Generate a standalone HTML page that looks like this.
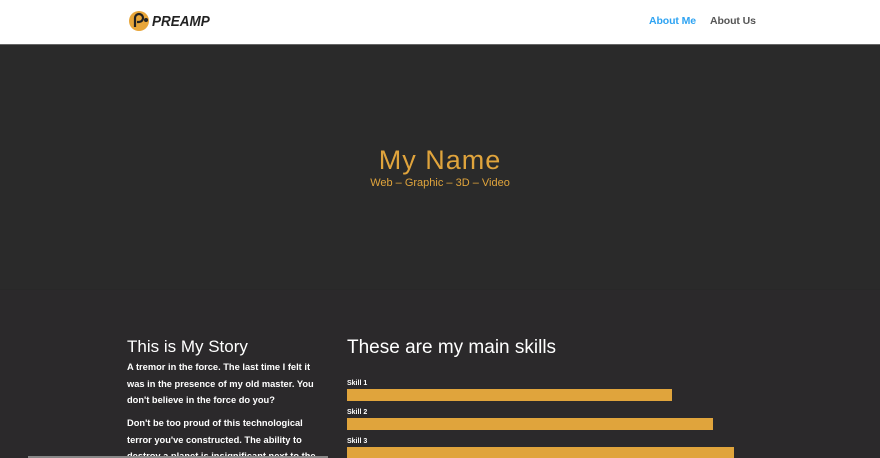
<!DOCTYPE html>
<html style="width:880px;height:458px;overflow:hidden"><head><meta charset="utf-8"><style>
*{margin:0;padding:0;box-sizing:border-box}
body{width:880px;height:458px;overflow:hidden;background:#2b292b;font-family:"Liberation Sans",sans-serif;position:relative}
.hdr{position:absolute;left:0;top:0;width:880px;height:45px;background:#fff;border-bottom:1px solid #666}
.logo{position:absolute;left:128px;top:10px;display:flex;align-items:center}
.logo span{font-weight:bold;font-size:15px;color:#222;font-style:italic;margin-left:2px;transform:scaleX(0.9);transform-origin:left}
.nav{position:absolute;top:15px;font-size:10.5px;font-weight:bold;letter-spacing:-0.1px}
.hero{position:absolute;left:0;top:45px;width:880px;height:245px;background:#2a2a2a;border-bottom:1px solid #282828}
.h1{position:absolute;left:0;width:880px;text-align:center;top:100px;color:#e0a43c;font-size:27px;letter-spacing:1px}
.sub{position:absolute;left:0;width:880px;text-align:center;top:132px;color:#e0a43c;font-size:11px}
h2{position:absolute;color:#fff;font-weight:normal;font-size:17px;white-space:nowrap}
.p{position:absolute;left:127px;color:#fff;font-size:9.3px;font-weight:bold;line-height:16.5px;white-space:nowrap}
.sk{position:absolute;left:347px;color:#fff;font-size:7px;font-weight:bold}
.bar{position:absolute;left:347px;height:12px;background:#e0a43c}
</style></head><body>
<div class="hdr">
 <div class="logo"><svg width="22" height="22" viewBox="0 0 22 22"><circle cx="11" cy="11" r="10" fill="#e8a63a"/><path d="M7 17V8a4 4 0 1 1 4 4H9" stroke="#222" stroke-width="2.2" fill="none"/><circle cx="18" cy="10" r="2" fill="#222"/></svg><span>PREAMP</span></div>
 <div class="nav" style="left:649px;color:#2ea3f2">About Me</div>
 <div class="nav" style="left:710px;color:#555">About Us</div>
</div>
<div class="hero">
 <div class="h1">My Name</div>
 <div class="sub">Web – Graphic – 3D – Video</div>
</div>
<h2 style="left:127px;top:337px">This is My Story</h2>
<div class="p" style="top:359px">A tremor in the force. The last time I felt it<br>was in the presence of my old master. You<br>don't believe in the force do you?</div>
<div class="p" style="top:415px">Don't be too proud of this technological<br>terror you've constructed. The ability to<br>destroy a planet is insignificant next to the</div>
<h2 style="left:347px;top:337px;font-size:19px">These are my main skills</h2>
<div class="sk" style="top:380px">Skill 1</div><div class="bar" style="top:389px;width:325px"></div>
<div class="sk" style="top:409px">Skill 2</div><div class="bar" style="top:418px;width:366px"></div>
<div class="sk" style="top:438px">Skill 3</div><div class="bar" style="top:447px;width:387px"></div>
<div style="position:absolute;left:28px;top:456px;width:300px;height:2px;background:#888"></div>
</body></html>
